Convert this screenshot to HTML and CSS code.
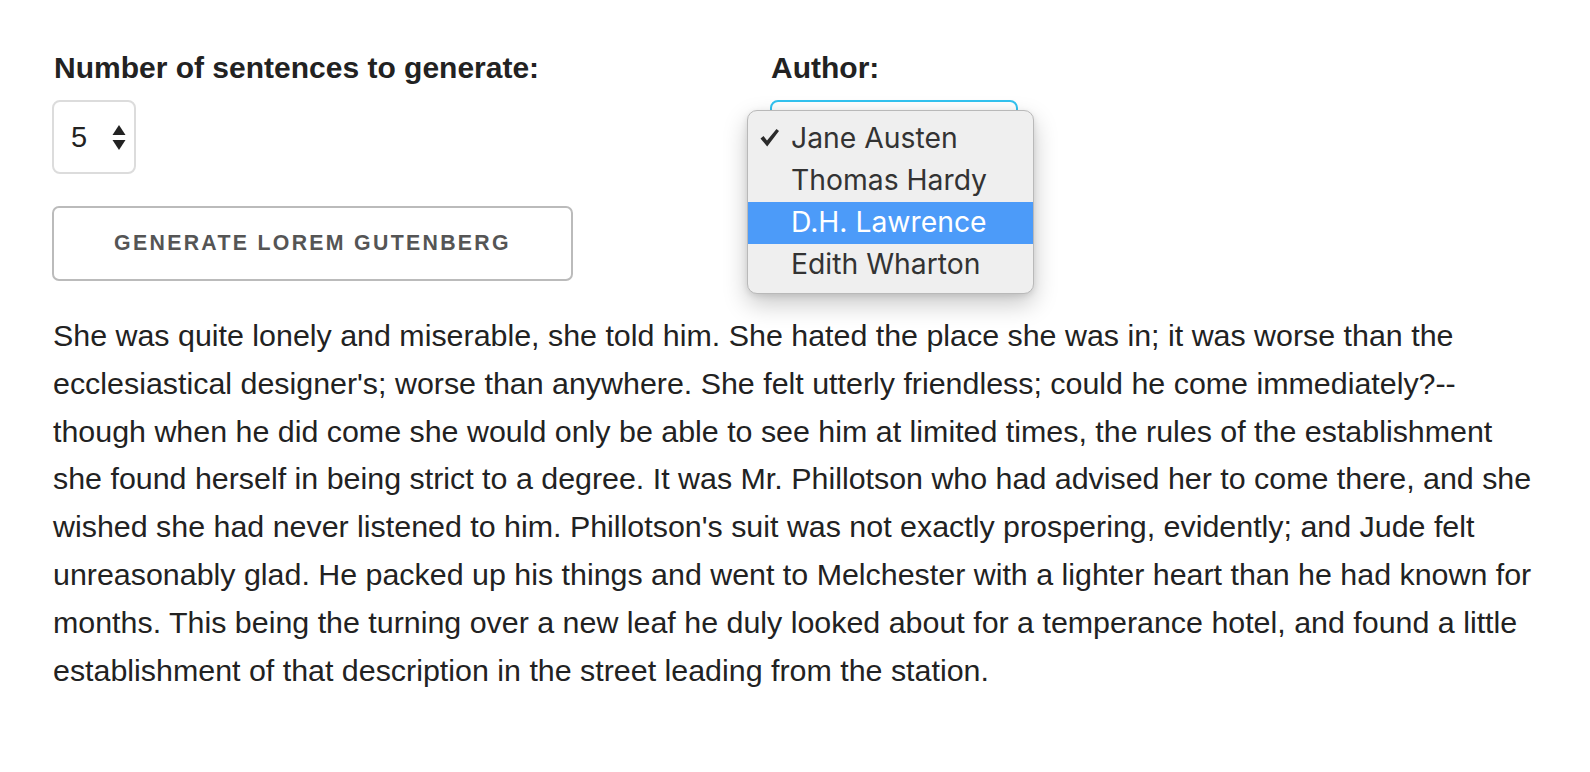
FILE: index.html
```html
<!DOCTYPE html>
<html lang="en">
<head>
<meta charset="utf-8">
<title>Lorem Gutenberg</title>
<link rel="stylesheet" href="styles.css">
</head>
<body>
<main class="page">
  <div class="controls">
    <div class="col col-left">
      <label class="field-label">Number of sentences to generate:</label>
      <div class="number-input" role="spinbutton" aria-valuenow="5">
        <span class="number-value">5</span>
        <svg class="spinner" width="14" height="26" viewBox="0 0 14 26">
          <path d="M7 0 L13.5 10 L0.5 10 Z" fill="#222"/>
          <path d="M0.5 15 L13.5 15 L7 25 Z" fill="#222"/>
        </svg>
      </div>
      <button class="btn" type="button">Generate Lorem Gutenberg</button>
    </div>
    <div class="col col-right">
      <label class="field-label">Author:</label>
      <div class="select-wrap">
        <div class="select-box"></div>
        <ul class="menu">
          <li class="menu-item is-checked">
            <svg class="check" width="21" height="20" viewBox="0 0 21 20"><path d="M1.5 10.5 L4.5 8 L8 12.5 L17.5 1 L20 3 L8.2 18.5 Z" fill="#2b2b2b"/></svg>
            Jane Austen
          </li>
          <li class="menu-item">Thomas Hardy</li>
          <li class="menu-item is-active">D.H. Lawrence</li>
          <li class="menu-item">Edith Wharton</li>
        </ul>
      </div>
    </div>
  </div>
  <p class="text">She was quite lonely and miserable, she told him. She hated the place she was in; it was worse than the ecclesiastical designer's; worse than anywhere. She felt utterly friendless; could he come immediately?--<wbr>though when he did come she would only be able to see him at limited times, the rules of the establishment she found herself in being strict to a degree. It was Mr. Phillotson who had advised her to come there, and she wished she had never listened to him. Phillotson's suit was not exactly prospering, evidently; and Jude felt unreasonably glad. He packed up his things and went to Melchester with a lighter heart than he had known for months. This being the turning over a new leaf he duly looked about for a temperance hotel, and found a little establishment of that description in the street leading from the station.</p>
</main>
</body>
</html>
```

FILE: styles.css
```css
* { box-sizing: border-box; }

html, body {
  margin: 0;
  padding: 0;
  background: #fff;
}

body {
  font-family: "Liberation Sans", Arial, Helvetica, sans-serif;
  color: #222;
}

.page {
  padding: 48px 53px 0 53px;
}

.controls {
  display: grid;
  grid-template-columns: 717px 1fr;
}

.col {
  display: flex;
  flex-direction: column;
  align-items: flex-start;
}

.field-label {
  font-weight: 700;
  font-size: 30px;
  line-height: 40px;
  color: #222;
  margin: 0 0 12px 1px;
}

.number-input {
  width: 84px;
  height: 74px;
  border: 2px solid #dcdcdc;
  border-radius: 8px;
  display: flex;
  align-items: center;
  padding: 0 0 0 17px;
  margin-left: -1px;
  background: #fff;
}

.number-value {
  font-size: 29px;
  color: #222;
  width: 41px;
}

.spinner { display: block; margin-top: 1px; }

.btn {
  margin-top: 32px;
  margin-left: -1px;
  width: 521px;
  height: 75px;
  border: 2px solid #bbb;
  border-radius: 7px;
  background: transparent;
  font-family: "Liberation Sans", Arial, Helvetica, sans-serif;
  font-weight: 700;
  font-size: 21.3px;
  letter-spacing: 2.3px;
  text-transform: uppercase;
  color: #555;
  padding: 0;
  cursor: pointer;
}

.select-wrap {
  position: relative;
  width: 248px;
  height: 74px;
}

.select-box {
  width: 100%;
  height: 100%;
  border: 2px solid #33c3f0;
  border-radius: 8px;
  background: #fff;
}

.menu {
  position: absolute;
  top: 10px;
  left: -23px;
  width: 287px;
  margin: 0;
  padding: 7px 0;
  list-style: none;
  background: #efefef;
  border: 1px solid #b9b9b9;
  border-radius: 10px;
  box-shadow: 0 10px 24px rgba(0, 0, 0, 0.22), 0 2px 6px rgba(0, 0, 0, 0.1);
  font-family: Inter, "Noto Sans", sans-serif;
  font-size: 28.3px;
  color: #333;
}

.menu-item {
  position: relative;
  height: 42px;
  line-height: 40px;
  padding-left: 43px;
  white-space: nowrap;
}

.menu-item.is-active {
  background: #4c9bf9;
  color: #fff;
}

.check {
  position: absolute;
  left: 11px;
  top: 10px;
}

.text {
  margin: 31px 0 0 0;
  font-size: 30.4px;
  line-height: 47.8px;
  color: #222;
}
```
